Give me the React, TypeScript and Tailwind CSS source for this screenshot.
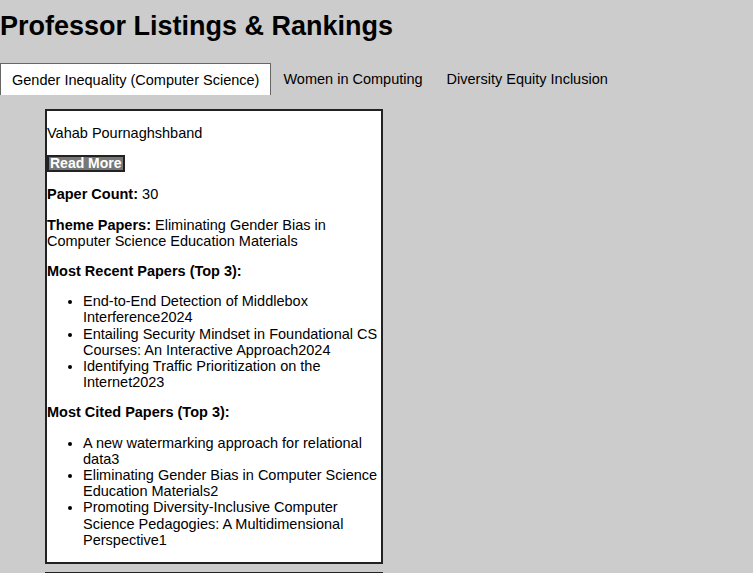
const professors = [
  {
    name: 'Vahab Pournaghshband',
    paperCount: 30,
    themePapers: 'Eliminating Gender Bias in Computer Science Education Materials',
    recent: [
      'End-to-End Detection of Middlebox Interference2024',
      'Entailing Security Mindset in Foundational CS Courses: An Interactive Approach2024',
      'Identifying Traffic Prioritization on the Internet2023',
    ],
    cited: [
      'A new watermarking approach for relational data3',
      'Eliminating Gender Bias in Computer Science Education Materials2',
      'Promoting Diversity-Inclusive Computer Science Pedagogies: A Multidimensional Perspective1',
    ],
  },
  {
    name: 'Christine Alvarado',
    paperCount: 42,
    themePapers: 'Increasing Women’s Participation in Computing',
    recent: ['Broadening Participation in Computing2024'],
    cited: ['Women in CS: Retention Strategies12'],
  },
];

const tabs = ['Gender Inequality (Computer Science)', 'Women in Computing', 'Diversity Equity Inclusion'];

function ProfessorCard({ prof }: { prof: (typeof professors)[number] }) {
  return (
    <div className="w-[338px] border-2 border-[#222] bg-white">
      <p className="my-[14px]">{prof.name}</p>
      <button className="my-[14px] block border-2 border-[#222] bg-[#777] px-[1px] text-[14px] font-bold leading-[13px] text-white">
        Read More
      </button>
      <p className="my-[14px]">
        <strong>Paper Count:</strong> {prof.paperCount}
      </p>
      <p className="my-[14px]">
        <strong>Theme Papers:</strong> {prof.themePapers}
      </p>
      <h4 className="my-[14px] font-bold">Most Recent Papers (Top 3):</h4>
      <ul className="my-[14px] list-disc pl-[36px]">
        {prof.recent.map((p) => (
          <li key={p}>{p}</li>
        ))}
      </ul>
      <h4 className="my-[14px] font-bold">Most Cited Papers (Top 3):</h4>
      <ul className="my-[14px] list-disc pl-[36px]">
        {prof.cited.map((p) => (
          <li key={p}>{p}</li>
        ))}
      </ul>
    </div>
  );
}

export default function App() {
  const active = 0;
  return (
    <div className="min-h-screen bg-[#cccccc] text-[14.5px] leading-[16.2px] text-black [font-family:'Liberation_Sans',Arial,sans-serif]">
      <h1 className="pt-[12px] text-[27px] font-bold leading-[28px]">Professor Listings &amp; Rankings</h1>
      <div className="mt-[23px] flex">
        {tabs.map((t, i) => (
          <button
            key={t}
            className={
              i === active
                ? 'border border-b-0 border-[#666] bg-white px-[11px] py-[7px] text-[14.5px] leading-[16.2px]'
                : 'border border-transparent px-[11px] py-[7px] text-[14.5px] leading-[16.2px]'
            }
          >
            {t}
          </button>
        ))}
      </div>
      <div className="mt-[14px] flex flex-col gap-[8px] pl-[45px]">
        {professors.map((p) => (
          <ProfessorCard key={p.name} prof={p} />
        ))}
      </div>
    </div>
  );
}
